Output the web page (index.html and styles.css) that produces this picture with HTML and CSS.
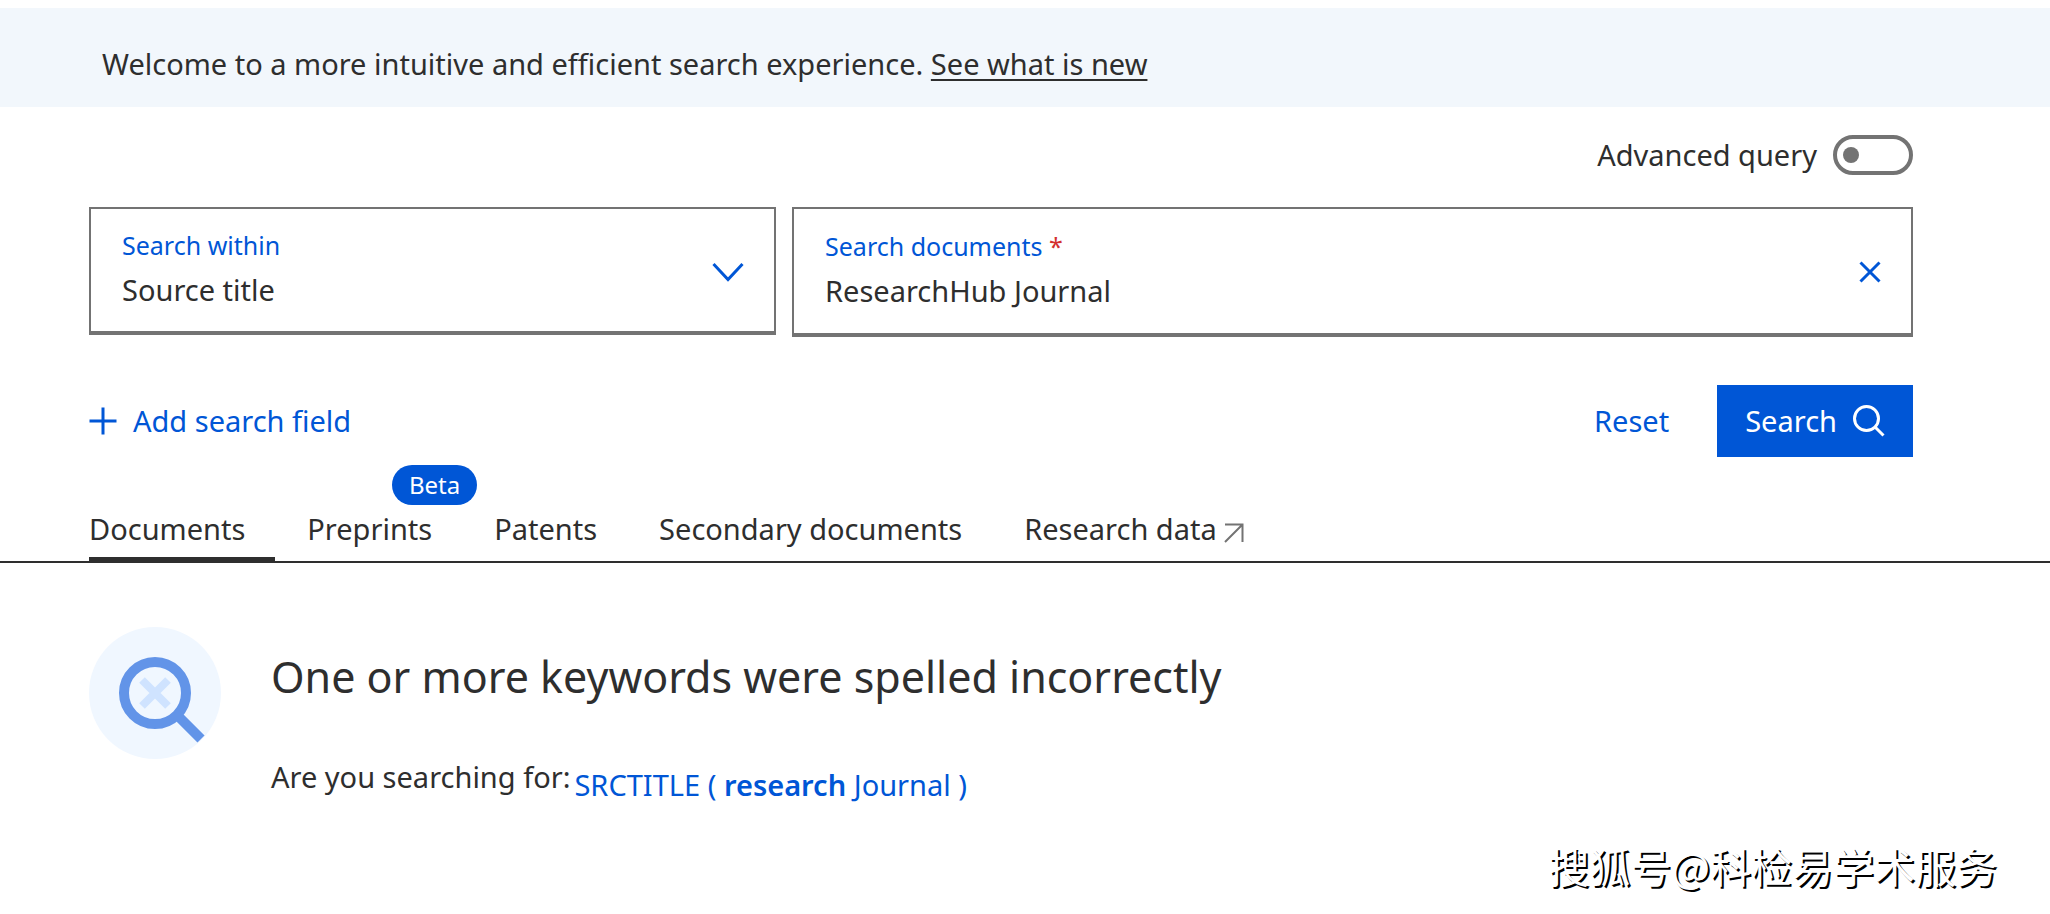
FILE: index.html
```html
<!DOCTYPE html>
<html lang="en">
<head>
  <meta charset="UTF-8">
  <meta name="viewport" content="width=device-width, initial-scale=1.0">
  <title>Document search</title>
  <link rel="stylesheet" href="styles.css">
</head>
<body>
  <div class="banner">
    <p>Welcome to a more intuitive and efficient search experience. <a href="#">See what is new</a></p>
  </div>

  <form class="search-form">
    <div class="advanced-row">
      <label for="advanced">Advanced query</label>
      <input type="checkbox" id="advanced" class="toggle">
    </div>

    <div class="fields">
      <div class="field field-within">
        <div class="field-body">
          <label for="within">Search within</label>
          <select id="within">
            <option>Source title</option>
          </select>
        </div>
        <svg class="chevron" viewBox="0 0 32 20"><path d="M1.5 2 L16 17.500 L30.500 2"/></svg>
      </div>
      <div class="field field-query">
        <div class="field-body">
          <label for="query">Search documents <span class="required">*</span></label>
          <input type="text" id="query" value="ResearchHub Journal">
        </div>
        <button type="button" class="clear" aria-label="Clear">
          <svg viewBox="0 0 22 22"><path d="M1.500 1.500 L20.500 20.500 M20.500 1.500 L1.500 20.500"/></svg>
        </button>
      </div>
    </div>

    <div class="actions">
      <button type="button" class="add-field">
        <svg viewBox="0 0 28 28"><path d="M14 0.500 V27.500 M0.500 14 H27.500"/></svg>
        Add search field
      </button>
      <div class="actions-right">
        <button type="reset" class="reset">Reset</button>
        <button type="button" class="search">
          Search
          <svg viewBox="0 0 32 32"><circle cx="13.500" cy="13.500" r="12"/><path d="M22 22 L30.500 30.500"/></svg>
        </button>
      </div>
    </div>
  </form>

  <!-- Result type tabs -->
  <nav class="tabs">
    <a href="#" class="tab active">Documents</a>
    <a href="#" class="tab">Preprints<span class="badge">Beta</span></a>
    <a href="#" class="tab">Patents</a>
    <a href="#" class="tab">Secondary documents</a>
    <a href="#" class="tab">Research data
      <svg viewBox="0 0 20 20"><path d="M1 1.500 H18.500 V19 M18 2 L1 19"/></svg>
    </a>
  </nav>

  <!-- Empty result message -->
  <main class="message">
    <svg class="message-icon" viewBox="0 0 132 132">
      <circle cx="66" cy="66" r="66" fill="#f0f7ff" stroke="none"/>
      <path d="M53 53 L79 79 M79 53 L53 79" stroke="#cfe3ff" stroke-width="8"/>
      <circle cx="66" cy="66" r="31" fill="none" stroke="#6294e8" stroke-width="10"/>
      <path d="M88 88 L112 112" stroke="#6294e8" stroke-width="10"/>
    </svg>
    <div class="message-text">
      <h1>One or more keywords were spelled incorrectly</h1>
      <div class="suggestion">
        <span>Are you searching for:</span>
        <a href="#">SRCTITLE ( <b>research</b> Journal )</a>
      </div>
    </div>
  </main>

  <div class="watermark">搜狐号@科检易学术服务</div>
</body>
</html>
```
FILE: styles.css
```css
* {
  box-sizing: border-box;
}
body {
  margin: 0;
  padding-top: 8px;
  font-family: "Noto Sans", sans-serif;
  font-size: 29px;
  line-height: 40px;
  color: #2e2e2e;
  background: #fff;
}
button, input, select {
  margin: 0;
  padding: 0;
  border: none;
  background: none;
  font: inherit;
  color: inherit;
}
button { cursor: pointer; }
svg {
  flex-shrink: 0;
  fill: none;
  stroke: currentColor;
  stroke-width: 3;
}
a { color: inherit; }

.banner {
  padding: 36px 102px 23px;
  background: #f2f7fc;
}
.banner p { margin: 0; }
.banner a {
  text-decoration-thickness: 2px;
  text-underline-offset: 4px;
}

/* Search form */
.search-form { padding: 28px 137px 0 89px; }
.advanced-row {
  display: flex;
  justify-content: flex-end;
  gap: 16px;
}
.toggle {
  appearance: none;
  width: 80px;
  height: 40px;
  padding: 8px 6px;
  border: 4px solid #737373;
  border-radius: 20px;
}
.toggle::before {
  content: "";
  display: block;
  width: 16px;
  height: 16px;
  border-radius: 50%;
  background: #737373;
}
.fields {
  display: grid;
  grid-template-columns: 38fr 62fr;
  align-items: start;
  gap: 16px;
  margin-top: 32px;
}
.field {
  display: flex;
  align-items: center;
  min-width: 0;
  border: 2px solid #737373;
  border-bottom-width: 4px;
  color: #0056d6;
}
.field-within {
  padding: 18px 30px 14px 31px;
}
.field-query {
  padding: 19px 30px 17px 31px;
}
.field-body {
  flex: 1;
  display: flex;
  flex-direction: column;
}
.field label {
  font-size: 25px;
  line-height: 36px;
}
.required { color: #d32f2f; }
.field select, .field input {
  appearance: none;
  width: 100%;
  height: 54px;
  color: #2e2e2e;
}
.field input { height: 52px; }
.chevron {
  width: 32px;
  height: 20px;
}
.clear {
  width: 22px;
  height: 22px;
}
.clear svg, .message-icon { display: block; }

.actions {
  display: flex;
  justify-content: space-between;
  align-items: center;
  margin-top: 48px;
  color: #0056d6;
}
.actions-right {
  display: flex;
  gap: 48px;
}
.add-field {
  display: flex;
  align-items: center;
  gap: 16px;
}
.add-field svg { width: 28px; }
.search {
  display: flex;
  align-items: center;
  gap: 16px;
  height: 72px;
  padding: 0 28px;
  color: #fff;
  background: #0056d6;
}
.search svg { width: 32px; }

/* Tabs */
.tabs {
  display: flex;
  gap: 32px;
  margin-top: 52px;
  padding-left: 89px;
  border-bottom: 2px solid #2e2e2e;
}
.tab {
  position: relative;
  height: 52px;
  padding-right: 30px;
  border-bottom: 4px solid transparent;
  text-decoration: none;
}
.tab.active { border-color: #2e2e2e; }
.tab svg {
  width: 20px;
  vertical-align: -3px;
  color: #737373;
  stroke-width: 2;
}
.badge {
  position: absolute;
  right: -15px;
  bottom: 52px;
  padding: 0 17px;
  border-radius: 20px;
  font-size: 24px;
  color: #fff;
  background: #0056d6;
}

.message {
  display: flex;
  gap: 50px;
  padding: 64px 89px 0;
}
.message-icon {
  width: 132px;
  height: 132px;
}
.message h1 {
  margin: 22px 0 0;
  font-size: 43px;
  line-height: 56px;
  font-weight: 400;
}
.suggestion {
  display: flex;
  align-items: flex-end;
  gap: 4px;
  margin-top: 52px;
}
.suggestion span { margin-bottom: 8px; }
.suggestion a {
  color: #0056d6;
  text-decoration: none;
}
.suggestion b { font-weight: 600; }

.watermark {
  position: absolute;
  right: 53px;
  bottom: 19px;
  font-family: "Noto Sans CJK SC", sans-serif;
  font-size: 41px;
  line-height: 60px;
  color: #fff;
  text-shadow: 2px 2px 0 #000;
}
```
